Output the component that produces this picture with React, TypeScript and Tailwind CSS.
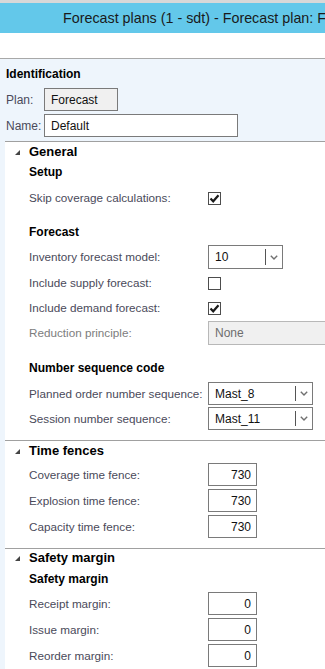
import React from "react";

const Tri = () => (
  <svg width="5" height="5" viewBox="0 0 5 5" className="shrink-0">
    <polygon points="5,0 5,5 0,5" fill="#454545" />
  </svg>
);

const Chevron = () => (
  <svg width="8" height="5" viewBox="0 0 8 5">
    <polyline points="0.8,0.8 4,4 7.2,0.8" fill="none" stroke="#707070" strokeWidth="1.4" />
  </svg>
);

const Check = ({ checked }: { checked: boolean }) => (
  <div className="w-[13px] h-[13px] border border-[#4d4d4d] bg-white flex items-center justify-center">
    {checked && (
      <svg width="11" height="11" viewBox="0 0 11 11">
        <polyline points="1.5,5.5 4.2,8.3 9.5,2.3" fill="none" stroke="#1a1a1a" strokeWidth="2.2" />
      </svg>
    )}
  </div>
);

const Label = ({ children, muted }: { children: React.ReactNode; muted?: boolean }) => (
  <div className={`w-[179px] shrink-0 whitespace-nowrap text-[11.7px] ${muted ? "text-[#7d7d7d]" : "text-[#4a4a5a]"}`}>{children}</div>
);

const Combo = ({ value, w }: { value: string; w: string }) => (
  <div className={`${w} h-full border border-[#7a7a7a] bg-white flex items-stretch`}>
    <div className="flex-1 pl-[6px] flex items-center text-[#111]">{value}</div>
    <div className="flex items-center py-[3px]">
      <div className="w-px h-full bg-[#555]" />
    </div>
    <div className="w-[16px] flex items-center justify-center">
      <Chevron />
    </div>
  </div>
);

const Num = ({ value }: { value: string }) => (
  <div className="w-[49px] h-full border border-[#7a7a7a] bg-white flex items-center justify-end pr-[5px] text-[#111]">{value}</div>
);

export default function App() {
  return (
    <div className="w-[325px] h-[669px] overflow-hidden bg-[#eef5fc] text-[12px] leading-[16px] font-['Liberation_Sans',Arial,sans-serif] text-[#111]">
      <div className="h-[3px] bg-[#d8d8d8]" />
      <div className="h-[30px] bg-[#63c8ea] pl-[63px] flex items-center overflow-hidden">
        <span className="text-[14.3px] text-[#1a1a1a] whitespace-nowrap">Forecast plans (1 - sdt) - Forecast plan: F</span>
      </div>
      <div className="h-[26px] bg-white border-b border-[#a8a8a8]" />

      <div className="pl-[6px] pt-[7px] pb-[4px]">
        <div className="h-[16px] flex items-center font-bold text-black">Identification</div>
        <div className="mt-[6px] h-[23px] flex items-center">
          <div className="w-[38px] text-[#4a4a5a]">Plan:</div>
          <div className="w-[74px] h-full border border-[#7a7a7a] bg-[#f0f0f0] pl-[6px] flex items-center">Forecast</div>
        </div>
        <div className="mt-[3px] h-[23px] flex items-center">
          <div className="w-[38px] text-[#4a4a5a]">Name:</div>
          <div className="w-[194px] h-full border border-[#7a7a7a] bg-white pl-[6px] flex items-center">Default</div>
        </div>
      </div>

      <div className="ml-[5px] bg-white">
        {/* General */}
        <div className="border-t border-[#a0a0a0] pb-[10px]">
          <div className="h-[20px] flex items-center pl-[10px] gap-[9px] text-[13px] font-bold text-black">
            <Tri />
            <span>General</span>
          </div>
          <div className="pl-[24px]">
            <div className="mt-[2px] h-[16px] flex items-center font-bold text-black">Setup</div>
            <div className="mt-[7px] h-[22px] flex items-center">
              <Label>Skip coverage calculations:</Label>
              <Check checked />
            </div>
            <div className="mt-[15px] h-[16px] flex items-center font-bold text-black">Forecast</div>
            <div className="mt-[5px] h-[24px] flex items-center">
              <Label>Inventory forecast model:</Label>
              <Combo value="10" w="w-[75px]" />
            </div>
            <div className="mt-[3px] h-[22px] flex items-center">
              <Label>Include supply forecast:</Label>
              <Check checked={false} />
            </div>
            <div className="mt-[3px] h-[22px] flex items-center">
              <Label>Include demand forecast:</Label>
              <Check checked />
            </div>
            <div className="mt-[2px] h-[24px] flex items-center">
              <Label muted>Reduction principle:</Label>
              <div className="flex-1 h-full border border-[#b8b8b8] border-r-0 bg-[#f0f0f0] pl-[6px] flex items-center text-[#6d6d6d]">None</div>
            </div>
            <div className="mt-[15px] h-[16px] flex items-center font-bold text-black">Number sequence code</div>
            <div className="mt-[6px] h-[23px] flex items-center">
              <Label>Planned order number sequence:</Label>
              <Combo value="Mast_8" w="w-[105px]" />
            </div>
            <div className="mt-[2px] h-[23px] flex items-center">
              <Label>Session number sequence:</Label>
              <Combo value="Mast_11" w="w-[105px]" />
            </div>
          </div>
        </div>

        {/* Time fences */}
        <div className="border-t border-[#a0a0a0] pb-[10px]">
          <div className="h-[20px] flex items-center pl-[10px] gap-[9px] text-[13px] font-bold text-black">
            <Tri />
            <span>Time fences</span>
          </div>
          <div className="pl-[24px]">
            <div className="mt-[2px] h-[23px] flex items-center">
              <Label>Coverage time fence:</Label>
              <Num value="730" />
            </div>
            <div className="mt-[3px] h-[23px] flex items-center">
              <Label>Explosion time fence:</Label>
              <Num value="730" />
            </div>
            <div className="mt-[3px] h-[23px] flex items-center">
              <Label>Capacity time fence:</Label>
              <Num value="730" />
            </div>
          </div>
        </div>

        {/* Safety margin */}
        <div className="border-t border-[#a0a0a0] pb-[10px]">
          <div className="h-[18px] flex items-center pl-[10px] gap-[9px] text-[13px] font-bold text-black">
            <Tri />
            <span>Safety margin</span>
          </div>
          <div className="pl-[24px]">
            <div className="mt-[4px] h-[16px] flex items-center font-bold text-black">Safety margin</div>
            <div className="mt-[5px] h-[23px] flex items-center">
              <Label>Receipt margin:</Label>
              <Num value="0" />
            </div>
            <div className="mt-[3px] h-[23px] flex items-center">
              <Label>Issue margin:</Label>
              <Num value="0" />
            </div>
            <div className="mt-[3px] h-[23px] flex items-center">
              <Label>Reorder margin:</Label>
              <Num value="0" />
            </div>
          </div>
        </div>
      </div>
    </div>
  );
}
